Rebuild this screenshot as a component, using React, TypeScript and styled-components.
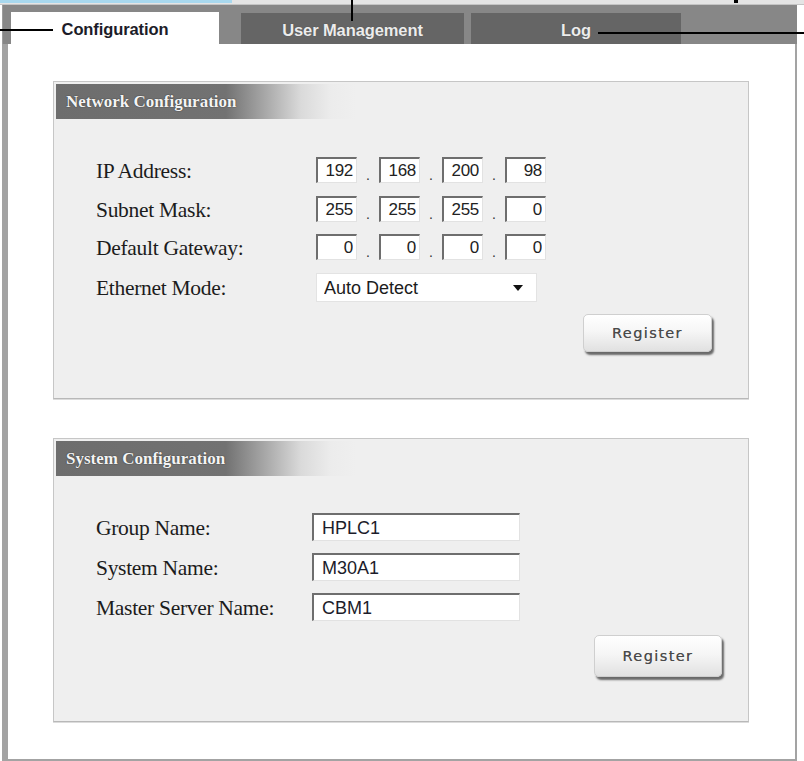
import React from "react";
import styled, { createGlobalStyle } from "styled-components";

const Global = createGlobalStyle`
  html, body { margin: 0; padding: 0; background: #ffffff; }
  body { font-family: "Liberation Sans", Arial, sans-serif; }
  * { box-sizing: border-box; }
`;

const Page = styled.div`
  position: relative;
  width: 804px;
  height: 761px;
  overflow: hidden;
  background: #ffffff;
`;

const TopStrip = styled.div`
  height: 5px;
  background: #e4e4e4;
  border-bottom: 1px solid #c4c4c4;
`;

const BlueBar = styled.div`
  width: 232px;
  height: 3px;
  background: #a8d8ee;
`;

const Frame = styled.div`
  margin-left: 2px;
  width: 795px;
  display: flex;
  flex-direction: column;
`;

const TabBar = styled.div`
  height: 39px;
  background: #878787;
  display: flex;
  align-items: flex-end;
  padding-left: 8px;
  border-left: 1px solid #9c9c9c;
`;

const Tab = styled.div<{ $active?: boolean; $w: number; $ml: number }>`
  width: ${(p) => p.$w}px;
  height: ${(p) => (p.$active ? 32 : 31)}px;
  margin-left: ${(p) => p.$ml}px;
  background: ${(p) => (p.$active ? "#ffffff" : "#656565")};
  color: ${(p) => (p.$active ? "#1c1c28" : "#ececec")};
  font-family: "Liberation Sans", Arial, sans-serif;
  font-weight: bold;
  font-size: 16.5px;
  letter-spacing: -0.1px;
  display: flex;
  align-items: center;
  justify-content: center;
  padding-top: 3px;
  text-shadow: ${(p) => (p.$active ? "none" : "0 0 1px #444")};
`;

const Content = styled.div`
  background: #ffffff;
  border-left: 6px solid #a3a3a3;
  border-right: 2px solid #a3a3a3;
  border-bottom: 2px solid #a3a3a3;
  padding: 37px 46px 37px 45px;
  display: flex;
  flex-direction: column;
  gap: 39px;
`;

const Panel = styled.section`
  width: 696px;
  background: #efefef;
  border: 1px solid #c6c6c6;
  border-bottom-color: #b8b8b8;
  box-shadow: 0 1px 0 #dcdcdc;
  padding: 2px 2px 0 2px;
`;

const PanelHeader = styled.h2`
  margin: 0;
  height: 35px;
  padding-left: 10px;
  display: flex;
  align-items: center;
  font-family: "Liberation Serif", "Times New Roman", serif;
  font-weight: bold;
  font-size: 17px;
  color: #f4f4f4;
  text-shadow: 0 0 1px #3a3a3a, 0 0 1px #3a3a3a;
  background: linear-gradient(
    to right,
    #6d6d6d 0px,
    #727272 170px,
    #a9a9a9 210px,
    #dadada 245px,
    #ececec 275px,
    #efefef 300px
  );
`;

const PanelBody = styled.div<{ $pt: number; $pb: number }>`
  padding: ${(p) => p.$pt}px 0 ${(p) => p.$pb}px 40px;
  display: flex;
  flex-direction: column;
`;

const FormGrid = styled.div<{ $labelW: number; $gap: number }>`
  display: grid;
  grid-template-columns: ${(p) => p.$labelW}px auto;
  row-gap: ${(p) => p.$gap}px;
  align-items: center;
`;

const Label = styled.label`
  font-family: "Liberation Serif", "Times New Roman", serif;
  font-size: 21.5px;
  letter-spacing: -0.3px;
  color: #1c1c1c;
  line-height: 1;
  padding-top: 4px;
`;

const IpGroup = styled.div`
  display: flex;
  align-items: stretch;
  height: 26px;
`;

const Octet = styled.input`
  width: 41px;
  height: 26px;
  border: none;
  border-top: 2px solid #6e6e6e;
  border-left: 2px solid #6e6e6e;
  border-right: 1px solid #e2e2e2;
  border-bottom: 1px solid #e2e2e2;
  background: #ffffff;
  font-family: "Liberation Sans", Arial, sans-serif;
  font-size: 17px;
  letter-spacing: -0.3px;
  color: #222;
  text-align: right;
  padding: 1px 3px 0 0;
  outline: none;
`;

const Dot = styled.span`
  width: 22px;
  display: flex;
  align-items: flex-end;
  justify-content: center;
  font-family: "Liberation Sans", Arial, sans-serif;
  font-size: 14px;
  color: #333;
  line-height: 1;
  padding-bottom: 1px;
`;

const SelectWrap = styled.div`
  position: relative;
  width: 221px;
  height: 29px;
  &::after {
    content: "";
    position: absolute;
    right: 14px;
    top: 12px;
    border-left: 5px solid transparent;
    border-right: 5px solid transparent;
    border-top: 6px solid #111;
    pointer-events: none;
  }
`;

const Select = styled.select`
  appearance: none;
  -webkit-appearance: none;
  width: 100%;
  height: 100%;
  border: 1px solid #e3e3e3;
  border-radius: 0;
  background: #ffffff;
  font-family: "Liberation Sans", Arial, sans-serif;
  font-size: 18px;
  color: #1c1c1c;
  padding: 1px 0 0 7px;
  outline: none;
`;

const TextField = styled.input`
  width: 208px;
  height: 28px;
  border: none;
  border-top: 2px solid #6e6e6e;
  border-left: 2px solid #6e6e6e;
  border-right: 1px solid #e2e2e2;
  border-bottom: 1px solid #e2e2e2;
  background: #ffffff;
  font-family: "Liberation Sans", Arial, sans-serif;
  font-size: 18px;
  color: #1c1c2a;
  padding: 1px 0 0 8px;
  outline: none;
`;

const ButtonRow = styled.div<{ $mt: number; $pr: number }>`
  display: flex;
  justify-content: flex-end;
  margin-top: ${(p) => p.$mt}px;
  padding-right: ${(p) => p.$pr}px;
`;

const RegisterButton = styled.button<{ $w: number; $h: number }>`
  width: ${(p) => p.$w}px;
  height: ${(p) => p.$h}px;
  border: 1px solid #cfcfcf;
  border-radius: 5px;
  background: linear-gradient(to bottom, #ffffff 0%, #f6f6f6 45%, #e1e1e1 100%);
  box-shadow: 2px 3px 2px rgba(60, 60, 60, 0.75);
  font-family: "DejaVu Sans", "Liberation Sans", sans-serif;
  font-size: 14.5px;
  letter-spacing: 1.4px;
  color: #4a4a4a;
  text-shadow: 0 0 0.6px #777;
  padding: 0;
  cursor: pointer;
`;

const HLine = styled.div`
  position: absolute;
  height: 2px;
  background: #000;
`;

const VLine = styled.div`
  position: absolute;
  width: 2px;
  background: #000;
`;

const ipRows: { label: string; values: string[] }[] = [
  { label: "IP Address:", values: ["192", "168", "200", "98"] },
  { label: "Subnet Mask:", values: ["255", "255", "255", "0"] },
  { label: "Default Gateway:", values: ["0", "0", "0", "0"] },
];

const sysRows = [
  { label: "Group Name:", value: "HPLC1" },
  { label: "System Name:", value: "M30A1" },
  { label: "Master Server Name:", value: "CBM1" },
];

export default function App() {
  return (
    <>
      <Global />
      <Page>
        <TopStrip>
          <BlueBar />
        </TopStrip>
        <Frame>
          <TabBar>
            <Tab $active $w={208} $ml={0}>
              Configuration
            </Tab>
            <Tab $w={223} $ml={22}>
              User Management
            </Tab>
            <Tab $w={210} $ml={7}>
              Log
            </Tab>
          </TabBar>
          <Content>
            <Panel>
              <PanelHeader>Network Configuration</PanelHeader>
              <PanelBody $pt={38} $pb={46.5}>
                <FormGrid $labelW={220} $gap={12.5}>
                  {ipRows.map((row) => (
                    <React.Fragment key={row.label}>
                      <Label>{row.label}</Label>
                      <IpGroup>
                        {row.values.map((v, i) => (
                          <React.Fragment key={i}>
                            {i > 0 && <Dot>.</Dot>}
                            <Octet defaultValue={v} />
                          </React.Fragment>
                        ))}
                      </IpGroup>
                    </React.Fragment>
                  ))}
                  <Label>Ethernet Mode:</Label>
                  <SelectWrap>
                    <Select defaultValue="auto">
                      <option value="auto">Auto Detect</option>
                      <option value="100f">100M Full</option>
                      <option value="10h">10M Half</option>
                    </Select>
                  </SelectWrap>
                </FormGrid>
                <ButtonRow $mt={12} $pr={34}>
                  <RegisterButton $w={129} $h={38}>Register</RegisterButton>
                </ButtonRow>
              </PanelBody>
            </Panel>
            <Panel>
              <PanelHeader>System Configuration</PanelHeader>
              <PanelBody $pt={37} $pb={44}>
                <FormGrid $labelW={216} $gap={12}>
                  {sysRows.map((row) => (
                    <React.Fragment key={row.label}>
                      <Label>{row.label}</Label>
                      <TextField defaultValue={row.value} />
                    </React.Fragment>
                  ))}
                </FormGrid>
                <ButtonRow $mt={14} $pr={24}>
                  <RegisterButton $w={128} $h={42}>Register</RegisterButton>
                </ButtonRow>
              </PanelBody>
            </Panel>
          </Content>
        </Frame>
        <HLine style={{ left: 0, top: 29, width: 53 }} />
        <VLine style={{ left: 351, top: 0, height: 21 }} />
        <HLine style={{ left: 598, top: 32, width: 206 }} />
        <VLine style={{ left: 734, top: 0, height: 3, width: 4 }} />
      </Page>
    </>
  );
}
